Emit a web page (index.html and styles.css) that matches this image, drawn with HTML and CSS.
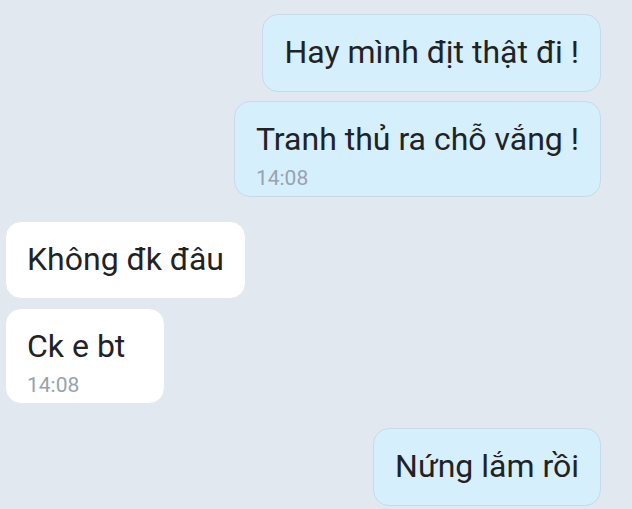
FILE: index.html
```html
<!DOCTYPE html>
<html lang="vi">
<head>
<meta charset="utf-8">
<link rel="stylesheet" href="styles.css">
</head>
<body>
<div class="chat">
  <div class="row out"><div class="bubble"><div class="text">Hay mình địt thật đi !</div></div></div>
  <div class="row out"><div class="bubble"><div class="text">Tranh thủ ra chỗ vắng !</div><div class="time">14:08</div></div></div>
  <div class="row in group"><div class="bubble"><div class="text">Không đk đâu</div></div></div>
  <div class="row in"><div class="bubble"><div class="text">Ck e bt</div><div class="time">14:08</div></div></div>
  <div class="row out group"><div class="bubble"><div class="text">Nứng lắm rồi</div></div></div>
</div>
</body>
</html>
```
FILE: styles.css
```css
html, body {
  margin: 0;
  padding: 0;
  background: #e2e8f0;
  height: 100%;
  overflow: hidden;
}
body {
  font-family: Roboto, "Noto Sans", sans-serif;
}
.chat {
  display: flex;
  flex-direction: column;
  gap: 9px;
  padding: 14px 31px 0 5px;
}
.row {
  display: flex;
}
.row.group {
  margin-top: 15px;
}
.row.out {
  justify-content: flex-end;
}
.row.in {
  justify-content: flex-start;
}
.bubble {
  border-radius: 16px;
  padding: 18px 21px 19px;
  min-width: 160px;
  box-sizing: border-box;
}
.out .bubble {
  background: #d6effd;
  border: 1px solid #c6dbe8;
}
.in .bubble {
  background: #ffffff;
  border: 1px solid #e3e8ee;
}
.text {
  font-size: 32px;
  line-height: 39px;
  color: #1f2326;
}
.time {
  font-size: 21px;
  line-height: 24px;
  color: #97a3ad;
  margin-top: 7px;
  margin-bottom: -13px;
}
```
